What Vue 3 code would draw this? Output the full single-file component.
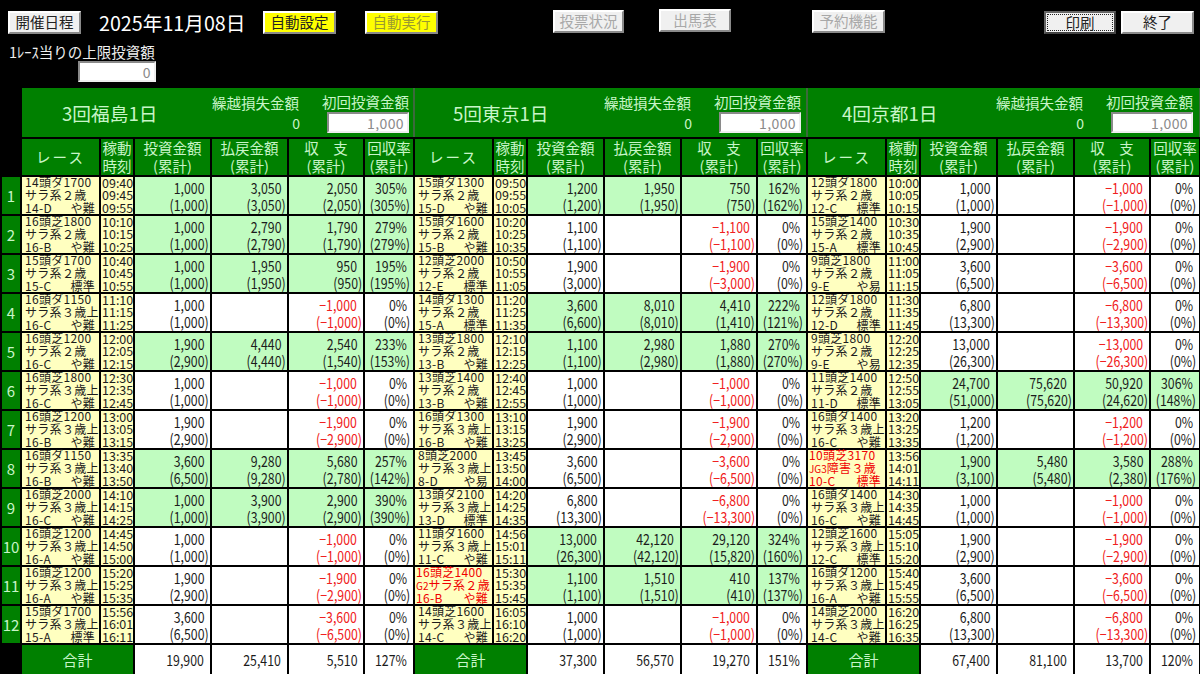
<template>
  <div class="screen">
    <!-- Top buttons -->
    <div class="top">
      <div class="toolbar">
        <button class="btn" type="button">開催日程</button>
        <span class="date">2025年11月08日</span>
        <button class="btn btn-yellow btn-auto" type="button">自動設定</button>
        <button class="btn btn-yellow btn-run" type="button" disabled>自動実行</button>
        <button class="btn btn-vote" type="button" disabled>投票状況</button>
        <button class="btn btn-card" type="button" disabled>出馬表</button>
        <button class="btn btn-reserve" type="button" disabled>予約機能</button>
        <button class="btn btn-print" type="button"><span class="focus-ring">印刷</span></button>
        <button class="btn btn-quit" type="button">終了</button>
      </div>
      <div class="limit">
        <div class="limit-label">1ﾚｰｽ当りの上限投資額</div>
        <input class="field limit-field" value="0" readonly />
      </div>
    </div>

    <!-- Board -->
    <div class="board">
      <div></div>
      <div v-for="p in panels" :key="p.title" class="panel-head">
        <div class="panel-title" :style="{ paddingLeft: p.inset + 'px' }">{{ p.title }}</div>
        <div class="carry">
          <div>繰越損失金額</div>
          <div class="carry-value">0</div>
        </div>
        <div class="first-bet">
          <div>初回投資金額</div>
          <input class="field first-field" value="1,000" readonly />
        </div>
      </div>

      <div></div>
      <template v-for="p in panels" :key="p.title">
        <div class="col-head col-race">レース</div>
        <div class="col-head">稼動<br />時刻</div>
        <div class="col-head">投資金額<br />(累計)</div>
        <div class="col-head">払戻金額<br />(累計)</div>
        <div class="col-head">収　支<br />(累計)</div>
        <div class="col-head">回収率<br />(累計)</div>
      </template>

      <template v-for="n in 12" :key="n">
        <div class="row-no">{{ n }}</div>
        <template v-for="p in panels" :key="p.title">
          <div class="race" :class="{ 'is-special': p.rows[n - 1].grade }">
            <div>{{ p.rows[n - 1].field }}</div>
            <div><span class="grade">{{ p.rows[n - 1].grade }}</span>{{ p.rows[n - 1].cls }}</div>
            <div class="race-foot">
              <span>{{ p.rows[n - 1].code }}</span><span>{{ p.rows[n - 1].level }}</span>
            </div>
          </div>
          <div class="times">
            <div v-for="t in p.rows[n - 1].times" :key="t">{{ t }}</div>
          </div>
          <div
            v-for="(c, i) in p.rows[n - 1].cells"
            :key="i"
            class="money"
            :class="{ win: p.rows[n - 1].win, loss: i === 2 && !p.rows[n - 1].win, rate: i === 3 }"
          >
            <div class="num">{{ c[0] }}</div>
            <div class="num sum">{{ c[1] }}</div>
          </div>
        </template>
      </template>

      <div></div>
      <template v-for="p in panels" :key="p.title">
        <div class="total-label">合計</div>
        <div v-for="(t, i) in p.totals" :key="i" class="total">
          <div class="num">{{ t }}</div>
        </div>
      </template>
    </div>
  </div>
</template>

<script setup>
// race|class|code|going|t1|t2|t3|invest|invest sum|payout
const kaisai = [
  {
    title: '3回福島1日',
    inset: 40,
    data: [
      '14頭ダ1700|サラ系２歳|14-D|や難|09:40|09:45|09:55|1000|1000|3050',
      '16頭芝1800|サラ系２歳|16-B|や難|10:10|10:15|10:25|1000|1000|2790',
      '15頭ダ1700|サラ系２歳|15-C|標準|10:40|10:45|10:55|1000|1000|1950',
      '16頭ダ1150|サラ系３歳上|16-C|や難|11:10|11:15|11:25|1000|1000|0',
      '16頭芝1200|サラ系２歳|16-C|や難|12:00|12:05|12:15|1900|2900|4440',
      '16頭芝1800|サラ系３歳上|16-C|や難|12:30|12:35|12:45|1000|1000|0',
      '16頭芝1200|サラ系３歳上|16-B|や難|13:00|13:05|13:15|1900|2900|0',
      '16頭ダ1150|サラ系３歳上|16-B|や難|13:35|13:40|13:50|3600|6500|9280',
      '16頭芝2000|サラ系３歳上|16-C|や難|14:10|14:15|14:25|1000|1000|3900',
      '16頭芝1200|サラ系３歳上|16-A|や難|14:45|14:50|15:00|1000|1000|0',
      '16頭芝1200|サラ系３歳上|16-A|や難|15:20|15:25|15:35|1900|2900|0',
      '15頭ダ1700|サラ系３歳上|15-A|標準|15:56|16:01|16:11|3600|6500|0',
    ],
  },
  {
    title: '5回東京1日',
    inset: 38,
    data: [
      '15頭ダ1300|サラ系２歳|15-D|や難|09:50|09:55|10:05|1200|1200|1950',
      '15頭ダ1600|サラ系２歳|15-B|や難|10:20|10:25|10:35|1100|1100|0',
      '12頭芝2000|サラ系２歳|12-E|標準|10:50|10:55|11:05|1900|3000|0',
      '14頭ダ1300|サラ系２歳|15-A|標準|11:20|11:25|11:35|3600|6600|8010',
      '13頭芝1800|サラ系２歳|13-B|や難|12:10|12:15|12:25|1100|1100|2980',
      '13頭芝1400|サラ系２歳|13-B|や難|12:40|12:45|12:55|1000|1000|0',
      '16頭ダ1300|サラ系３歳上|16-B|や難|13:10|13:15|13:25|1900|2900|0',
      '8頭芝2000|サラ系３歳上|8-D|や易|13:45|13:50|14:00|3600|6500|0',
      '13頭ダ2100|サラ系３歳上|13-D|標準|14:20|14:25|14:35|6800|13300|0',
      '11頭ダ1600|サラ系３歳上|11-C|や難|14:56|15:01|15:11|13000|26300|42120',
      '16頭芝1400|G2サラ系２歳|16-B|や難|15:30|15:35|15:45|1100|1100|1510',
      '14頭芝1600|サラ系３歳上|14-C|や難|16:05|16:10|16:20|1000|1000|0',
    ],
  },
  {
    title: '4回京都1日',
    inset: 34,
    data: [
      '12頭ダ1800|サラ系２歳|12-C|標準|10:00|10:05|10:15|1000|1000|0',
      '15頭芝1400|サラ系２歳|15-A|標準|10:30|10:35|10:45|1900|2900|0',
      '9頭芝1800|サラ系２歳|9-E|や易|11:00|11:05|11:15|3600|6500|0',
      '12頭ダ1800|サラ系２歳|12-D|標準|11:30|11:35|11:45|6800|13300|0',
      '9頭芝1800|サラ系２歳|9-E|や易|12:20|12:25|12:35|13000|26300|0',
      '11頭芝1400|サラ系２歳|11-D|標準|12:50|12:55|13:05|24700|51000|75620',
      '16頭ダ1400|サラ系３歳上|16-C|や難|13:20|13:25|13:35|1200|1200|0',
      '10頭芝3170|JG3障害３歳|10-C|標準|13:56|14:01|14:11|1900|3100|5480',
      '16頭ダ1400|サラ系３歳上|16-C|や難|14:30|14:35|14:45|1000|1000|0',
      '12頭芝1600|サラ系３歳上|12-C|標準|15:05|15:10|15:20|1900|2900|0',
      '16頭ダ1200|サラ系３歳上|16-A|や難|15:40|15:45|15:55|3600|6500|0',
      '14頭芝2000|サラ系３歳上|14-C|や難|16:20|16:25|16:35|6800|13300|0',
    ],
  },
]

const yen = (v) => (v < 0 ? '−' : '') + Math.abs(v).toLocaleString('en-US')
const pct = (pay, bet) => Math.floor((pay / bet) * 100) + '%'

const parseRow = (line) => {
  const [field, rawCls, code, level, t1, t2, t3, ...nums] = line.split('|')
  const [bet, betSum, pay] = nums.map(Number)
  const m = rawCls.match(/^(J?G\d)(.*)$/)
  return {
    field,
    grade: m ? m[1] : '',
    cls: m ? m[2] : rawCls,
    code,
    level,
    times: [t1, t2, t3],
    bet,
    pay,
    win: pay > 0,
    cells: [
      [yen(bet), `(${yen(betSum)})`],
      pay ? [yen(pay), `(${yen(pay)})`] : ['', ''],
      [yen(pay - bet), `(${yen(pay - betSum)})`],
      [pct(pay, bet), `(${pct(pay, betSum)})`],
    ],
  }
}

const panels = kaisai.map((k) => {
  const rows = k.data.map(parseRow)
  const bet = rows.reduce((a, r) => a + r.bet, 0)
  const pay = rows.reduce((a, r) => a + r.pay, 0)
  return {
    title: k.title,
    inset: k.inset,
    rows,
    totals: [yen(bet), yen(pay), yen(pay - bet), pct(pay, bet)],
  }
})
</script>

<style>
html,
body {
  background: #000;
}
</style>

<style scoped>
.screen {
  width: 1200px;
  height: 674px;
  overflow: hidden;
  background: #000;
  font-family: "Noto Sans CJK JP", sans-serif;
  color: #1c1c1c;
}

/* Top */
.top {
  height: 88px;
}

.toolbar {
  display: flex;
  align-items: center;
  padding: 11px 0 0 8px;
}

.btn {
  width: 73px;
  height: 23px;
  padding: 0;
  font-family: inherit;
  font-size: 14.5px;
  line-height: 1;
  color: #222;
  background: #f0f0f0;
  border: 2px solid;
  border-color: #fff #8a8a8a #8a8a8a #fff;
}

.btn:disabled {
  color: #a8a8a8;
}

.btn-yellow {
  background: #ffff00;
}

.btn-yellow:disabled {
  color: #9a9a30;
}

.date {
  margin-left: 18px;
  width: 146px;
  font-size: 19.7px;
  line-height: 23px;
  color: #fff;
  white-space: nowrap;
}

.btn-auto {
  margin-left: 18px;
}

.btn-run {
  margin-left: 29px;
}

.btn-vote {
  margin-left: 115px;
  width: 71px;
  margin-top: -2px;
}

.btn-card {
  margin-left: 35px;
  width: 72px;
  margin-top: -4px;
}

.btn-reserve {
  margin-left: 81px;
  margin-top: -2px;
}

.btn-print {
  margin-left: 159px;
  width: 72px;
  border-color: #666 #444 #444 #666;
}

.focus-ring {
  display: block;
  margin: 1px;
  line-height: 15px;
  border: 1px dotted #222;
}

.btn-quit {
  margin-left: 5px;
}

.limit {
  margin: 9px 0 0 9px;
}

.limit-label {
  font-size: 14.5px;
  line-height: 18px;
  color: #eee;
}

.field {
  display: block;
  box-sizing: border-box;
  height: 21px;
  padding: 0 3px;
  font-family: inherit;
  font-size: 14px;
  letter-spacing: 0.4px;
  text-align: right;
  color: #8a8a8a;
  background: #fff;
  border: 2px solid;
  border-color: #8a8a8a #eee #eee #8a8a8a;
  outline: none;
}

.limit-field {
  width: 78px;
  margin-left: 69px;
}

/* Board */
.board {
  display: grid;
  grid-template-columns: 18px repeat(3, 77px 32px 75px 75px 74px 48px);
  grid-template-rows: 49px 36px repeat(12, 37px) 29px;
  gap: 2px;
  padding-left: 2px;
}

.panel-head {
  grid-column: span 6;
  display: flex;
  align-items: center;
  color: #c8f5c8;
  font-size: 14.5px;
  line-height: 20px;
  background: #008000;
  box-shadow: 2px 0 0 #3c6a3c;
}

.panel-title {
  flex: 1;
  font-size: 18.7px;
  white-space: nowrap;
}

.carry {
  width: 110px;
  white-space: nowrap;
}

.carry-value {
  padding-right: 22px;
  text-align: right;
  font-size: 14px;
}

.first-bet {
  width: 90px;
  margin-right: 1px;
  white-space: nowrap;
}

.panel-head:nth-child(3) .first-bet {
  margin-right: 2px;
}

.panel-head:nth-child(4) .first-bet {
  margin-right: 3px;
}

.first-field {
  width: 82px;
  margin-left: 5px;
}

.col-head {
  display: flex;
  align-items: center;
  justify-content: center;
  text-align: center;
  font-size: 14.5px;
  line-height: 18px;
  color: #c8f5c8;
  background: #008000;
  white-space: nowrap;
}

.col-race {
  letter-spacing: 2px;
}

.row-no {
  display: flex;
  align-items: center;
  justify-content: center;
  font-size: 15px;
  color: #c8f5c8;
  background: #008000;
}

.race,
.times {
  display: flex;
  flex-direction: column;
  justify-content: center;
  font-size: 12px;
  line-height: 12.4px;
  letter-spacing: 0.3px;
  background: #ffffc0;
  white-space: nowrap;
}

.race {
  padding: 0 4px 0 3px;
}

.is-special {
  color: #f00000;
  padding-left: 1px;
}

.grade {
  font-size: 10px;
  letter-spacing: 0;
}

.race-foot {
  display: flex;
  justify-content: space-between;
}

.times {
  padding-left: 1px;
  font-size: 12.5px;
  letter-spacing: 0;
}

.money {
  display: flex;
  flex-direction: column;
  justify-content: center;
  align-items: flex-end;
  padding-right: 6px;
  font-size: 15px;
  line-height: 17px;
  background: #fff;
  white-space: nowrap;
}

/* half-width digits like the original bitmap font */
.num {
  transform: scaleX(0.82);
  transform-origin: right center;
}

.money .sum {
  margin-right: -5px;
}

.money.rate .sum {
  margin-right: -3px;
}

.win {
  background: #c0fcc0;
}

.loss {
  color: #f02020;
}

.total-label {
  grid-column: span 2;
  display: flex;
  align-items: center;
  justify-content: center;
  font-size: 15px;
  color: #c8f5c8;
  background: #008000;
}

.total {
  display: flex;
  align-items: center;
  justify-content: flex-end;
  padding-right: 6px;
  font-size: 15px;
  background: #fff;
}
</style>
